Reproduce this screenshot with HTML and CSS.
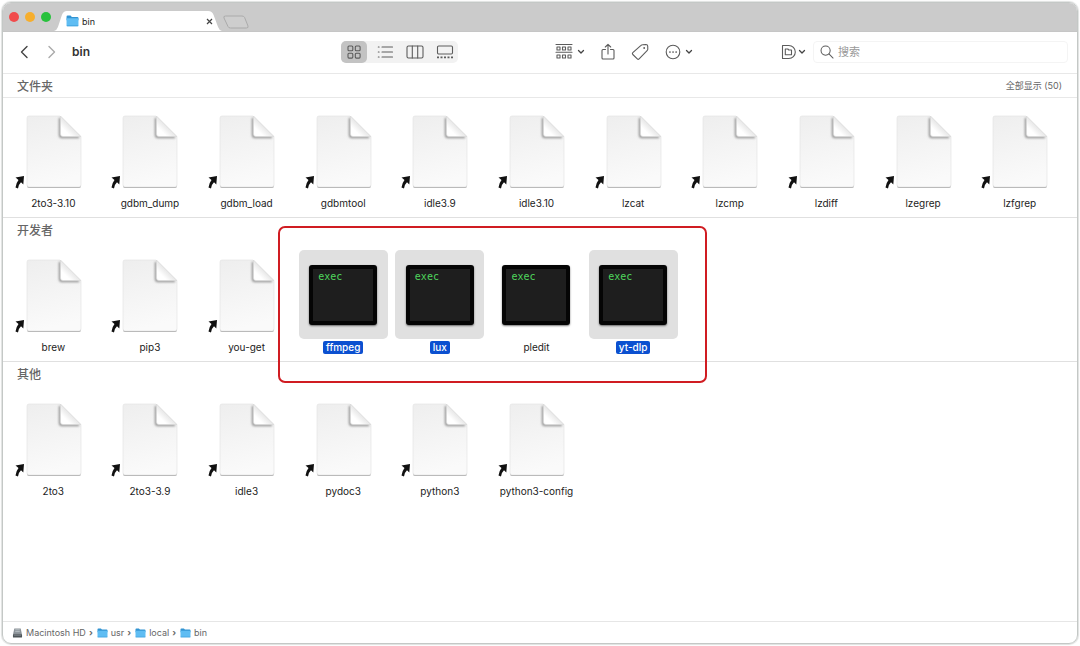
FILE: index.html
```html
<!DOCTYPE html>
<html lang="zh-CN">
<head>
<meta charset="utf-8">
<title>bin</title>
<link rel="stylesheet" href="styles.css">
</head>
<body>
<svg class="defs" aria-hidden="true">
  <defs>
    <linearGradient id="paper" x1="0" y1="0" x2=".2" y2="1"><stop offset="0" stop-color="#eeeeee"/><stop offset="1" stop-color="#fafafa"/></linearGradient>
    <linearGradient id="fold" x1="1" y1="0" x2="0" y2="1"><stop offset=".45" stop-color="#e2e2e2"/><stop offset=".75" stop-color="#ffffff"/></linearGradient>
    <filter id="soft" x="-30%" y="-30%" width="160%" height="160%"><feGaussianBlur stdDeviation="1.300"/></filter>
    <clipPath id="sheet"><path d="M19 10h33l20 20v49q0 2-2 2H19q-2 0-2-2V12q0-2 2-2z"/></clipPath>
  </defs>
  <symbol id="doc" viewBox="0 0 89 89">
    <path d="M18 78h54v2q0 2-2 2H20q-2 0-2-2z" fill="#aaa"/>
    <path d="M20 10h31l21 21v48q0 2-2 2H20q-2 0-2-2V12q0-2 2-2z" fill="url(#paper)" stroke="#e0e0e0" stroke-width=".6"/>
    <g clip-path="url(#sheet)"><path d="M51 12v17q0 2 2 2h17" fill="none" stroke="#999" stroke-width="2.500" filter="url(#soft)"/></g>
    <path d="M51.500 10L72 30.500H54q-2.500 0-2.500-2.500z" fill="url(#fold)" stroke="#d6d6d6" stroke-width=".6"/>
    <path d="M6.500 71.500L15 70l-.7 8.500-2.300-2.200Q9.500 78.500 9 82.500L6.500 81.500Q7 77 9.500 74z" fill="#111"/>
  </symbol>
  <symbol id="folder" viewBox="0 0 12 11">
    <path d="M.5 1.500Q.5.500 1.500.500h2.700l1.200 1.200h5.100q1 0 1 1v2H.5z" fill="#3294d2"/>
    <path d="M.5 3h11v6.500q0 .8-.8.8H1.300q-.8 0-.8-.8z" fill="#5fbdf3"/>
    <path d="M.7 9.900h10.600" stroke="#3d9fd9" stroke-width=".7"/>
  </symbol>
  <symbol id="chev" viewBox="0 0 8 6"><path d="M1.500 1.500L4 4l2.500-2.500" fill="none" stroke="currentColor" stroke-width="1.300" stroke-linecap="round" stroke-linejoin="round"/></symbol>
</svg>

<div class="window">
  <header class="titlebar">
    <div class="lights">
      <button class="light red" aria-label="关闭"></button>
      <button class="light amber" aria-label="最小化"></button>
      <button class="light green" aria-label="缩放"></button>
    </div>
    <div class="tab">
      <svg class="tab-shape" viewBox="0 0 170 20" preserveAspectRatio="none" aria-hidden="true"><path d="M0 20Q3 19 4 16L8 4Q9.500 0 13 0H156Q160 0 161.500 4L166 16Q167 19 170 20z" fill="#fff"/></svg>
      <svg class="tab-folder" aria-hidden="true"><use href="#folder"/></svg>
      <span class="tab-name">bin</span>
      <button class="tab-close" aria-label="关闭标签页"><svg viewBox="0 0 7 7"><path d="M1 1l5 5M6 1L1 6" stroke="#444" stroke-width="1.200"/></svg></button>
    </div>
    <button class="new-tab" aria-label="新标签页"><svg viewBox="0 0 28 14"><path d="M3.500 1H20q2 0 2.600 1.500L26 11q.6 2-1.500 2H8.500Q6.500 13 6 11.500L2 3Q1.200 1 3.500 1z" fill="#cecece" stroke="#aaa"/></svg></button>
  </header>

  <div class="toolbar">
    <nav class="nav">
      <button class="arrow" aria-label="后退"><svg viewBox="0 0 8 14"><path d="M7 1.500L1.500 7 7 12.500"/></svg></button>
      <button class="arrow off" aria-label="前进"><svg viewBox="0 0 8 14"><path d="M1 1.500L6.500 7 1 12.500"/></svg></button>
      <h1>bin</h1>
    </nav>
    <div class="views">
      <button class="view on" aria-label="图标"><svg viewBox="0 0 16 16"><rect x="2" y="2" width="4.800" height="4.800" rx="1"/><rect x="9.300" y="2" width="4.800" height="4.800" rx="1"/><rect x="2" y="9.300" width="4.800" height="4.800" rx="1"/><rect x="9.300" y="9.300" width="4.800" height="4.800" rx="1"/></svg></button>
      <button class="view" aria-label="列表"><svg viewBox="0 0 18 16"><path d="M6 3h10.500M6 8h10.500M6 13h10.500M2.300 3h.8M2.300 8h.8M2.300 13h.8"/></svg></button>
      <button class="view" aria-label="分栏"><svg viewBox="0 0 18 16"><rect x="1" y="2" width="16" height="12" rx="1.500"/><path d="M6.300 2v12M11.700 2v12"/></svg></button>
      <button class="view" aria-label="画廊"><svg viewBox="0 0 18 16"><rect x="1.500" y="2" width="15" height="8" rx="1.200"/><path class="dots" d="M1 13.300h2M4.500 13.300h2M8 13.300h2M11.500 13.300h2M15 13.300h2"/></svg></button>
    </div>
    <div class="tools">
      <button class="tool" aria-label="分组">
        <svg class="w18" viewBox="0 0 18 18"><path d="M1 1.500h16M1 9.200h16"/><path d="M2 4h3v3H2zM7.500 4h3v3h-3zM13 4h3v3h-3zM2 12h3v3H2zM7.500 12h3v3h-3zM13 12h3v3h-3z"/></svg>
        <svg class="caret"><use href="#chev"/></svg>
      </button>
      <button class="tool" aria-label="共享"><svg class="w14" viewBox="0 0 14 18"><path d="M4.500 6.500H2q-1 0-1 1V15q0 1 1 1h10q1 0 1-1V7.500q0-1-1-1H9.500M7 11V1.500M4.300 4L7 1.300 9.700 4"/></svg></button>
      <button class="tool" aria-label="标签"><svg class="w18" viewBox="0 0 18 18"><path d="M10 2.300q.6-.6 1.400-.6l3.600-.2q1.600 0 1.700 1.500l.1 3q0 .9-.7 1.600l-8 8.300q-.9.900-1.800 0L1.800 11.500q-.9-.9 0-1.800z"/><circle cx="13.200" cy="5" r=".4"/></svg></button>
      <button class="tool" aria-label="更多">
        <svg class="w16" viewBox="0 0 16 16"><circle cx="8" cy="8" r="6.800"/><path d="M4.900 8h.1M8 8h.1M11.100 8h.1" stroke-width="1.700"/></svg>
        <svg class="caret"><use href="#chev"/></svg>
      </button>
    </div>
    <div class="finder">
      <button class="tool scope" aria-label="搜索范围">
        <svg class="w16" viewBox="0 0 16 16"><path d="M1.500 1.500h6.300a6.500 6.500 0 010 13H1.500z"/><path d="M4.300 5h2.500l1 1h2.700v4.800H4.300z"/></svg>
        <svg class="caret"><use href="#chev"/></svg>
      </button>
      <label class="search">
        <svg viewBox="0 0 15 15" aria-hidden="true"><circle cx="6" cy="6" r="4.900"/><path d="M9.600 9.600l4.400 4.400"/></svg>
        <input type="search" placeholder="搜索" aria-label="搜索">
      </label>
    </div>
  </div>

  <main class="content">
    <section class="group-row ruled">
      <div class="head"><h2>文件夹</h2><a href="#all">全部显示 (50)</a></div>
      <ul class="grid">
        <li><button class="item"><svg class="tile"><use href="#doc"/></svg><span>2to3-3.10</span></button></li>
        <li><button class="item"><svg class="tile"><use href="#doc"/></svg><span>gdbm_dump</span></button></li>
        <li><button class="item"><svg class="tile"><use href="#doc"/></svg><span>gdbm_load</span></button></li>
        <li><button class="item"><svg class="tile"><use href="#doc"/></svg><span>gdbmtool</span></button></li>
        <li><button class="item"><svg class="tile"><use href="#doc"/></svg><span>idle3.9</span></button></li>
        <li><button class="item"><svg class="tile"><use href="#doc"/></svg><span>idle3.10</span></button></li>
        <li><button class="item"><svg class="tile"><use href="#doc"/></svg><span>lzcat</span></button></li>
        <li><button class="item"><svg class="tile"><use href="#doc"/></svg><span>lzcmp</span></button></li>
        <li><button class="item"><svg class="tile"><use href="#doc"/></svg><span>lzdiff</span></button></li>
        <li><button class="item"><svg class="tile"><use href="#doc"/></svg><span>lzegrep</span></button></li>
        <li><button class="item"><svg class="tile"><use href="#doc"/></svg><span>lzfgrep</span></button></li>
      </ul>
    </section>
    <section class="group-row">
      <div class="head"><h2>开发者</h2></div>
      <ul class="grid">
        <li><button class="item"><svg class="tile"><use href="#doc"/></svg><span>brew</span></button></li>
        <li><button class="item"><svg class="tile"><use href="#doc"/></svg><span>pip3</span></button></li>
        <li><button class="item"><svg class="tile"><use href="#doc"/></svg><span>you-get</span></button></li>
        <li><button class="item picked"><div class="tile"><div class="term">exec</div></div><span>ffmpeg</span></button></li>
        <li><button class="item picked"><div class="tile"><div class="term">exec</div></div><span>lux</span></button></li>
        <li><button class="item"><div class="tile"><div class="term">exec</div></div><span>pledit</span></button></li>
        <li><button class="item picked"><div class="tile"><div class="term">exec</div></div><span>yt-dlp</span></button></li>
      </ul>
      <div class="marker"></div>
    </section>
    <section class="group-row last">
      <div class="head"><h2>其他</h2></div>
      <ul class="grid">
        <li><button class="item"><svg class="tile"><use href="#doc"/></svg><span>2to3</span></button></li>
        <li><button class="item"><svg class="tile"><use href="#doc"/></svg><span>2to3-3.9</span></button></li>
        <li><button class="item"><svg class="tile"><use href="#doc"/></svg><span>idle3</span></button></li>
        <li><button class="item"><svg class="tile"><use href="#doc"/></svg><span>pydoc3</span></button></li>
        <li><button class="item"><svg class="tile"><use href="#doc"/></svg><span>python3</span></button></li>
        <li><button class="item"><svg class="tile"><use href="#doc"/></svg><span>python3-config</span></button></li>
      </ul>
    </section>
  </main>

  <footer class="path">
    <a href="#hd"><svg class="disk" viewBox="0 0 11 11" aria-hidden="true"><path d="M2 .5h7l1.500 7h-10z" fill="#8b9298"/><path d="M3 2h5M3 4h5" stroke="#bcc4c8"/><rect x=".5" y="7" width="10" height="3.500" rx=".6" fill="#4c5357"/><path d="M1.500 8h8" stroke="#8a9297" stroke-width=".8"/></svg>Macintosh HD</a>
    <i>›</i>
    <a href="#usr"><svg class="dir" aria-hidden="true"><use href="#folder"/></svg>usr</a>
    <i>›</i>
    <a href="#local"><svg class="dir" aria-hidden="true"><use href="#folder"/></svg>local</a>
    <i>›</i>
    <a href="#bin"><svg class="dir" aria-hidden="true"><use href="#folder"/></svg>bin</a>
  </footer>
</div>
</body>
</html>
```
FILE: styles.css
```css
* { box-sizing: border-box; }
body {
  margin: 0;
  padding: 2px;
  min-height: 100vh;
  display: flex;
  background: #fff;
  color: #1c1c1c;
  font-family: Inter, "Noto Sans CJK SC", sans-serif;
  font-size: 10px;
}
button { margin: 0; padding: 0; border: 0; background: none; color: inherit; font: inherit; }
a { color: inherit; text-decoration: none; }
h1, h2, ul { margin: 0; padding: 0; list-style: none; }
svg { display: block; }
.defs { position: absolute; width: 0; height: 0; }

.window {
  flex: 1;
  min-width: 0;
  display: flex;
  flex-direction: column;
  border: 1px solid #c4c8c6;
  border-radius: 9px;
  box-shadow: 0 0 1px 1px #dfe1e0;
  overflow: hidden;
}

.titlebar {
  display: flex;
  align-items: flex-end;
  height: 28px;
  background: #cbcbcb;
}
.lights { display: flex; gap: 6px; padding: 0 3px 0 6px; margin-bottom: 9px; }
.light { width: 10px; height: 10px; border-radius: 50%; }
.red { background: #f14b4c; }
.amber { background: #f6ae2d; }
.green { background: #27c13c; }
.tab {
  position: relative;
  display: flex;
  align-items: center;
  width: 168px;
  height: 20px;
  padding: 0 9px 0 12px;
  font-size: 9px;
}
.tab-shape { position: absolute; inset: 0; width: 100%; height: 100%; }
.tab-folder { position: relative; width: 13px; height: 12px; margin-right: 3px; }
.tab-name { position: relative; flex: 1; }
.tab-close { position: relative; }
.tab-close svg { width: 7px; height: 7px; }
.new-tab { margin-bottom: 2px; }
.new-tab svg { width: 28px; height: 14px; }

.toolbar {
  display: flex;
  align-items: center;
  height: 43px;
  padding: 0 9px 2px 17px;
  border-top: 1px solid #c6c6c6;
  border-bottom: 1px solid #e8e8e8;
}
.toolbar svg { fill: none; stroke: #5c5c5c; stroke-width: 1.100; stroke-linecap: round; stroke-linejoin: round; }
.nav { display: flex; align-items: center; flex: 321 1 0; gap: 20px; }
.nav .arrow svg { width: 8px; height: 14px; stroke: #444; stroke-width: 1.400; }
.nav .arrow.off svg { stroke: #aaa; }
h1 { margin-left: -4px; font-size: 12px; line-height: 16px; font-weight: 600; color: #333; }
.views { display: flex; gap: 5px; padding-right: 1px; border-radius: 5px; background: #f2f2f2; }
.view { display: grid; place-items: center; width: 25px; height: 22px; border-radius: 5px; }
.view.on { width: 26px; background: #c3c3c3; }
.view svg { width: 18px; height: 16px; }
.view.on svg { width: 16px; }
.view .dots { stroke-width: 1.800; stroke-linecap: butt; }
.tools { display: flex; align-items: center; flex: 226 1 0; gap: 16px; padding-left: 97px; }
.tool { display: flex; align-items: center; color: #444; }
.caret { width: 8px; height: 6px; margin-left: 4px; }
.w18 { width: 18px; height: 18px; }
.w16 { width: 16px; height: 16px; }
.w14 { width: 14px; height: 18px; }
.finder { display: flex; align-items: center; flex: 287 1 0; gap: 7px; }
.scope .caret { margin-left: 1px; }
.search {
  display: flex;
  align-items: center;
  flex: 1;
  height: 22px;
  padding: 0 6px;
  border: 1px solid #f4f4f4;
  border-radius: 4px;
}
.search svg { width: 14px; height: 14px; margin-right: 4px; }
.search input { flex: 1; min-width: 0; padding: 0; border: 0; outline: 0; background: none; font: inherit; font-size: 11px; }
.search input::placeholder { color: #999; }

.content { flex: 1; }
.group-row { position: relative; height: 144px; border-bottom: 1px solid #e0e0e0; }
.group-row.last { border-bottom: 0; }
.head {
  display: flex;
  align-items: center;
  justify-content: space-between;
  height: 24px;
  padding: 0 15px 1px 14px;
  border-bottom: 1px solid transparent;
  color: #666;
}
.ruled .head { border-color: #e8e8e8; }
h2 { font-size: 12px; font-weight: 500; }
.head a { font-size: 9px; }
.grid { display: grid; grid-template-columns: repeat(11, 1fr); padding: 8px 9px 0 2px; }
.grid li { display: flex; justify-content: center; }
.item { display: flex; flex-direction: column; align-items: center; gap: 2px; }
.tile { width: 89px; height: 89px; border-radius: 5px; display: grid; place-items: center; }
.item span { padding: 0 3px; border-radius: 2px; line-height: 13px; white-space: nowrap; }
.term {
  width: 68px;
  height: 60px;
  padding: 1px 0 0 5px;
  border: 4px solid #050505;
  border-radius: 3px;
  background: #1e1e1e;
  box-shadow: 0 1px 2px #0008;
  color: #4fd65d;
  font: 10px/14px "DejaVu Sans Mono", monospace;
  text-align: left;
}
.picked .tile { background: #e0e0e0; }
.picked span { background: #0b50d0; color: #fff; font-weight: 500; }
.marker {
  position: absolute;
  left: 275px;
  top: 8px;
  width: 429px;
  height: 157px;
  border: 2px solid #d01c22;
  border-radius: 7px;
  z-index: 1;
  pointer-events: none;
}

.path {
  display: flex;
  align-items: center;
  height: 22px;
  padding: 0 9px;
  border-top: 1px solid #e6e6e6;
  color: #666;
  font-size: 9px;
}
.path a { display: flex; align-items: center; gap: 3px; }
.path i { padding: 0 4px 0 3px; font-style: normal; font-weight: 700; }
.disk, .dir { width: 11px; height: 10px; }
```
